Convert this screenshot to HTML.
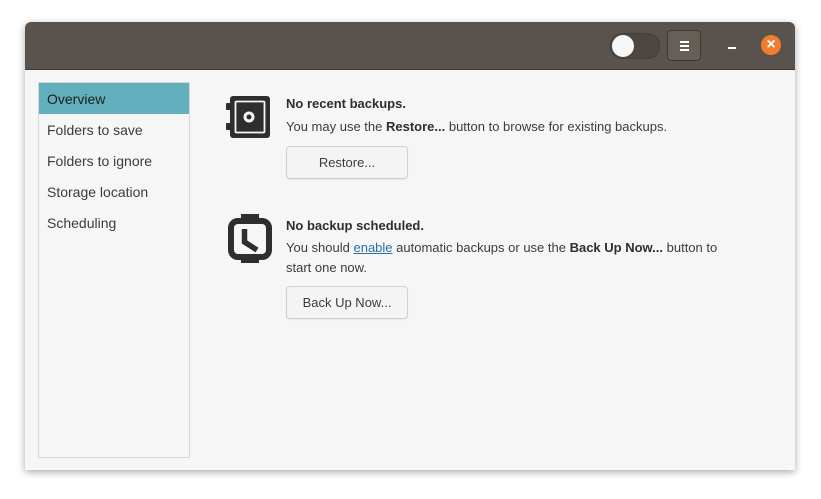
<!DOCTYPE html><html><head><style>
body{margin:0;width:821px;height:499px;background:#fff;font-family:"Liberation Sans",sans-serif;position:relative;overflow:hidden}
.win{position:absolute;left:25px;top:22px;width:770px;height:448px;background:#f6f6f6;border-radius:6px 6px 0 0;box-shadow:0 2px 8px rgba(0,0,0,.35);overflow:hidden}
.tb{position:absolute;left:0;top:0;width:770px;height:47px;background:#5a524c;border-bottom:1px solid #3e3833}
.sw{position:absolute;left:585px;top:11px;width:48px;height:24px;border-radius:12px;background:#4e4741;border:1px solid #443d38}
.sw i{position:absolute;left:1px;top:1px;width:22px;height:22px;border-radius:50%;background:#f7f7f7}
.mb{position:absolute;left:642px;top:8px;width:34px;height:31px;border-radius:4px;background:#665e57;border:1px solid #3f3934;box-sizing:border-box}
.mb i{position:absolute;left:12px;height:2px;width:9px;background:#fff}
.side{position:absolute;left:13px;top:60px;width:150px;height:374px;border:1px solid #d6d6d6;background:#f6f6f6}
.side div{height:31px;line-height:32px;padding-left:8px;font-size:14px;color:#3c3c3c}
.side .sel{background:#62b0bd;color:#1d1d1d}
.t{position:absolute;font-size:13px;color:#3c3c3c;line-height:20px}
b{color:#2e2e2e}
.btn{position:absolute;width:122px;height:33px;border:1px solid #cfcfcf;border-radius:4px;background:#f4f4f4;box-sizing:border-box;text-align:center;line-height:31px;font-size:13px;color:#3c3c3c;box-shadow:0 1px 1px rgba(0,0,0,.06)}
a{color:#2a6fa8;text-decoration:underline}
</style></head><body>
<div class="win">
<div class="tb">
<div class="sw"><i></i></div>
<div class="mb"><i style="top:10px"></i><i style="top:14px"></i><i style="top:18px"></i></div>
<div style="position:absolute;left:703px;top:25px;width:8px;height:2px;background:#fff"></div>
<div style="position:absolute;left:736px;top:13px;width:20px;height:20px;border-radius:50%;background:#ef7f2f;color:#fff;font-size:16px;font-weight:bold;line-height:20px;text-align:center">×</div>
</div>
<div class="side"><div class="sel">Overview</div><div>Folders to save</div><div>Folders to ignore</div><div>Storage location</div><div>Scheduling</div></div>
<svg style="position:absolute;left:199px;top:72px" width="50" height="50"><rect x="6" y="2" width="40" height="42" rx="3" fill="#2e2e2e"/><rect x="11.5" y="7.5" width="29" height="31" rx="1" fill="none" stroke="#f6f6f6" stroke-width="1.8"/><circle cx="25" cy="23" r="5.5" fill="#f6f6f6"/><circle cx="25" cy="23" r="2.5" fill="#2e2e2e"/><rect x="2" y="9" width="5" height="7" rx="1" fill="#2e2e2e"/><rect x="2" y="29" width="5" height="7" rx="1" fill="#2e2e2e"/></svg>
<div class="t" style="left:261px;top:72px"><b>No recent backups.</b></div>
<div class="t" style="left:261px;top:95px">You may use the <b>Restore...</b> button to browse for existing backups.</div>
<div class="btn" style="left:261px;top:124px">Restore...</div>
<svg style="position:absolute;left:201px;top:191px" width="50" height="52"><rect x="15" y="1" width="18" height="7" fill="#2e2e2e"/><rect x="15" y="43" width="18" height="7" fill="#2e2e2e"/><rect x="5" y="8" width="38" height="36" rx="7" fill="none" stroke="#2e2e2e" stroke-width="6"/><path d="M18.5 16V29L31 37" fill="none" stroke="#2e2e2e" stroke-width="5.5"/></svg>
<div class="t" style="left:261px;top:194px"><b>No backup scheduled.</b></div>
<div class="t" style="left:261px;top:216px;width:460px">You should <a>enable</a> automatic backups or use the <b>Back Up Now...</b> button to start one now.</div>
<div class="btn" style="left:261px;top:264px">Back Up Now...</div>
</div>
</body></html>
